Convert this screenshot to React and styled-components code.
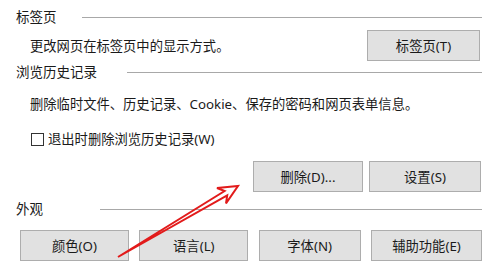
import React from "react";
import styled, { createGlobalStyle } from "styled-components";

const GlobalStyle = createGlobalStyle`
  html, body {
    margin: 0;
    padding: 0;
    background: #ffffff;
  }
  body {
    font-family: "Noto Sans", "Noto Sans CJK SC", sans-serif;
    color: #1a1a1a;
  }
`;

const Page = styled.div`
  position: relative;
  width: 500px;
  height: 273px;
  overflow: hidden;
  box-sizing: border-box;
  padding: 0 18px 0 16px;
  background: #fff;
`;

const TitleRow = styled.div`
  display: flex;
  align-items: center;
  margin-top: ${(p) => p.$top}px;
  height: 20px;
  font-size: 13.5px;
  line-height: 20px;
`;

const Rule = styled.div`
  flex: 1;
  height: 1px;
  background: #a8a8a8;
  margin-left: ${(p) => p.$gap}px;
`;

const Row = styled.div`
  display: flex;
  align-items: center;
  justify-content: ${(p) => p.$justify || "flex-start"};
  gap: ${(p) => p.$gap || 0}px;
  margin-top: ${(p) => p.$top}px;
  padding-left: ${(p) => p.$indent || 0}px;
  padding-right: ${(p) => p.$right || 0}px;
  min-height: 20px;
`;

const Text = styled.span`
  font-size: 13.3px;
  line-height: 20px;
  white-space: nowrap;
`;

const Check = styled.span`
  display: inline-block;
  width: 13px;
  height: 13px;
  box-sizing: border-box;
  border: 1px solid #333;
  background: #fff;
  margin-right: 4px;
`;

const Button = styled.button`
  box-sizing: border-box;
  width: ${(p) => (p.$w ? `${p.$w}px` : "auto")};
  height: 31px;
  padding: 0;
  background: #e1e1e1;
  border: 1px solid #adadad;
  border-radius: 0;
  font-family: inherit;
  font-size: 13.3px;
  color: #1a1a1a;
  cursor: default;
`;

const ButtonBar = styled.div`
  display: flex;
  justify-content: space-between;
  margin-top: 11px;
  padding-left: 4px;
`;

const Overlay = styled.svg`
  position: absolute;
  left: 0;
  top: 0;
  pointer-events: none;
`;

export default function App() {
  return (
    <>
      <GlobalStyle />
      <Page>
        <TitleRow $top={7}>
          标签页
          <Rule $gap={25} />
        </TitleRow>
        <Row $top={3} $indent={14} $right={2} $justify="space-between">
          <Text>更改网页在标签页中的显示方式。</Text>
          <Button $w={113}>标签页(T)</Button>
        </Row>

        <TitleRow $top={1}>
          浏览历史记录
          <Rule $gap={30} />
        </TitleRow>
        <Row $top={12} $indent={14}>
          <Text>删除临时文件、历史记录、Cookie、保存的密码和网页表单信息。</Text>
        </Row>
        <Row $top={15} $indent={15}>
          <Check />
          <Text>退出时删除浏览历史记录(W)</Text>
        </Row>
        <Row $top={12} $right={1} $gap={6} $justify="flex-end">
          <Button $w={110}>删除(D)...</Button>
          <Button $w={112}>设置(S)</Button>
        </Row>

        <TitleRow $top={7}>
          外观
          <Rule $gap={57} />
        </TitleRow>
        <ButtonBar>
          <Button $w={109}>颜色(O)</Button>
          <Button $w={109}>语言(L)</Button>
          <Button $w={102}>字体(N)</Button>
          <Button $w={111}>辅助功能(E)</Button>
        </ButtonBar>

        <Overlay width="500" height="273" viewBox="0 0 500 273">
          <polygon
            points="118,257 224.6,191 217,188 238,186 226,203.4 227.2,195.4"
            fill="none"
            stroke="#e21b1b"
            strokeWidth="2"
            strokeLinejoin="miter"
          />
        </Overlay>
      </Page>
    </>
  );
}
